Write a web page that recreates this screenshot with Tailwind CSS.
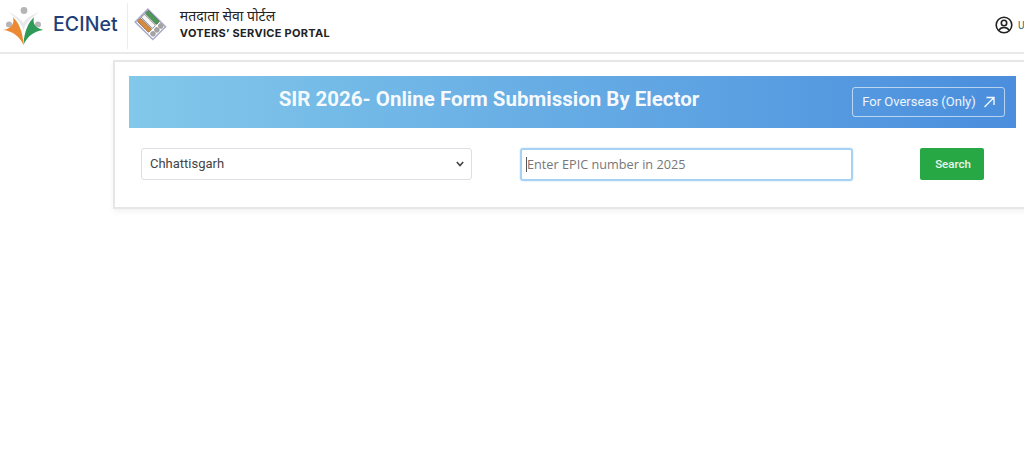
<!DOCTYPE html>
<html lang="en">
<head>
    <meta charset="UTF-8">
    <meta name="viewport" content="width=device-width, initial-scale=1.0">
    <title>Voters' Service Portal</title>
    <script src="https://cdn.jsdelivr.net/npm/@tailwindcss/browser@4"></script>
</head>
<body class="bg-white h-[468px] overflow-hidden font-['Roboto',sans-serif]">
    <!-- Header -->
    <header class="h-[54px] flex items-center border-b-2 border-[#e9e9e9] bg-white">
        <svg class="ml-[3px] -mt-[2px] w-[40px] h-[42px] shrink-0" viewBox="0 0 40 42">
            <circle cx="21" cy="6.500" r="3.400" fill="#b5b5b5"/>
            <circle cx="6" cy="20.500" r="3" fill="#b5b5b5"/>
            <circle cx="35" cy="20.500" r="3" fill="#b5b5b5"/>
            <path d="M4 7 C10 12 18 16 20.500 27 C22 18 30 13 36 8 C29 11 23 14 20.500 19 C17 14 10 10 4 7Z" fill="#e9e9e9"/>
            <path d="M0 26 C7 25 12 21 10 13 C16 19 20 28 20.500 41 C17 33 10 27 0 26Z" fill="#ec8a33"/>
            <path d="M41 26 C34 25 29 21 31 13 C25 19 21 28 20.500 41 C24 33 31 27 41 26Z" fill="#2f9a58"/>
        </svg>
        <span class="ml-[10px] -mt-[2px] text-[19.500px] leading-none font-medium text-[#1f3f78] font-['Inter',sans-serif] tracking-[0.1px]">ECINet</span>
        <div class="ml-[9px] w-px h-[46px] bg-[#ececec]"></div>
        <svg class="ml-[4px] -mt-[4px] w-[36px] h-[36px] shrink-0" viewBox="0 0 36 36">
            <g transform="rotate(-45 18 18)">
                <rect x="9" y="6" width="18" height="25" fill="none" stroke="#a9aac9" stroke-width="1.500"/>
                <rect x="11" y="7" width="4.500" height="16" rx="1" fill="#d98b3d" stroke="#555" stroke-width="0.600"/>
                <rect x="16.500" y="7" width="4.500" height="16" rx="1" fill="#f5f5f5" stroke="#555" stroke-width="0.600"/>
                <rect x="22" y="7" width="4.500" height="16" rx="1" fill="#4c9a55" stroke="#555" stroke-width="0.600"/>
                <circle cx="13.200" cy="27" r="2.700" fill="#a3a3a3"/>
                <circle cx="18.700" cy="27" r="2.700" fill="#a3a3a3"/>
                <circle cx="24.200" cy="27" r="2.700" fill="#a3a3a3"/>
            </g>
        </svg>
        <div class="ml-[12px] -mt-[5px] flex flex-col gap-[3px]">
            <span class="text-[14px] leading-[17px] text-[#222] font-['Noto_Sans','Noto_Sans_Devanagari',sans-serif]">मतदाता सेवा पोर्टल</span>
            <span class="text-[11px] leading-[13px] font-bold text-[#222] tracking-[0.3px] font-['Inter',sans-serif]">VOTERS’ SERVICE PORTAL</span>
        </div>
        <div class="ml-auto flex items-center gap-[5px] w-[29px] overflow-hidden shrink-0 -mt-[2px]">
            <svg class="w-[18px] h-[18px] shrink-0" viewBox="0 0 18 18" fill="none" stroke="#222" stroke-width="1.600">
                <circle cx="9" cy="9" r="7.800"/>
                <circle cx="9" cy="7" r="2.700"/>
                <path d="M3.800 14.500 C5 12 7 11.500 9 11.500 C11 11.500 13 12 14.200 14.500"/>
            </svg>
            <span class="text-[10px] text-[#2a6a6a]">U</span>
        </div>
    </header>

    <!-- Form card -->
    <main class="ml-[113px] mt-[6px] w-[919px] h-[149px] border-2 border-[#e6e6e6] bg-white pt-[14px] px-[14px] shadow-[0_3px_6px_rgba(0,0,0,0.05)]">
        <div class="relative h-[52px] flex items-center justify-center bg-gradient-to-r from-[#82c8ea] to-[#4a8edd]">
            <h1 class="text-[20.500px] font-bold text-white/95 -mt-[5px] -ml-[167px]">SIR 2026- Online Form Submission By Elector</h1>
            <a href="#" class="absolute right-[11px] top-[11px] w-[153px] h-[30px] flex items-center justify-center gap-[7px] border border-white/60 rounded-[3px] text-[13px] text-white/90">
                For Overseas (Only)
                <svg class="w-[12px] h-[12px]" viewBox="0 0 12 12" fill="none" stroke="#f2f7fd" stroke-width="1.400">
                    <path d="M1.500 11 L11 1.500 M3.500 1.500 H11 V9"/>
                </svg>
            </a>
        </div>
        <div class="mt-[20px] pl-[12px] flex items-start">
            <div class="relative w-[331px] h-[32px] border border-[#dcdfe3] rounded-[3px] flex items-center pl-[8px] text-[13px] text-[#444]">
                Chhattisgarh
                <svg class="absolute right-[7px] top-[12px] w-[8px] h-[6px]" viewBox="0 0 8 6" fill="none" stroke="#444" stroke-width="1.600">
                    <path d="M0.800 1 L4 4.500 L7.200 1"/>
                </svg>
            </div>
            <div class="ml-[48px] w-[333px] h-[33px] border-2 border-[#a8d2f5] rounded-[3px] shadow-[0_0_2px_#bcdcf8] flex items-center pl-[4px] text-[12.700px] text-[#777] font-['Open_Sans',sans-serif]">
                <span class="w-px h-[15px] bg-[#555]"></span>Enter EPIC number in 2025
            </div>
            <button class="ml-[67px] w-[64px] h-[32px] pt-[1px] pl-[2px] bg-[#28a745] rounded-[2px] text-[11.500px] font-medium text-white/90">Search</button>
        </div>
    </main>
</body>
</html>
